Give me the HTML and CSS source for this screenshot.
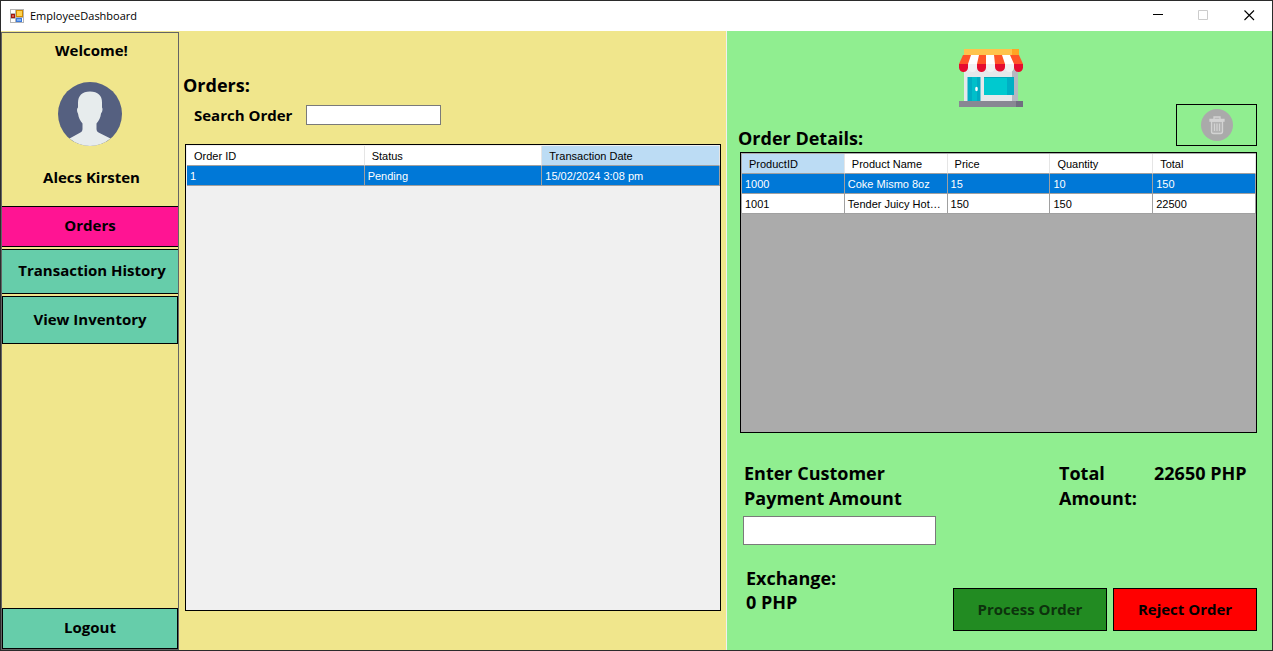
FILE: index.html
```html
<!DOCTYPE html>
<html lang="en">
<head>
<meta charset="utf-8">
<title>EmployeeDashboard</title>
<link rel="stylesheet" href="styles.css">
</head>
<body>
<div class="window">
  <header class="titlebar">
    <svg class="app-icon" width="14" height="14" viewBox="0 0 14 14" aria-hidden="true">
      <rect width="14" height="14" fill="#b5b5b5"/>
      <path d="M1 1h4v3H1zM1 10h4v3H1zM12 9h1v4h-1z" fill="#fff"/>
      <rect x="6" y="1" width="7" height="7" fill="#d18b00"/><rect x="7" y="2" width="5" height="5" fill="#ffd34e"/>
      <rect x="1" y="5" width="4" height="4" fill="#a01810"/><rect x="2" y="6" width="2" height="2" fill="#dd5a4c"/>
      <rect x="6" y="9" width="6" height="4" fill="#3c78d8"/><rect x="7" y="10" width="4" height="2" fill="#7db0f5"/>
    </svg>
    <h1 class="title">EmployeeDashboard</h1>
    <div class="window-controls">
      <button class="window-button" type="button" aria-label="Minimize"><svg width="11" height="11" viewBox="0 0 11 11"><path d="M1 4.500h10" stroke="#000"/></svg></button>
      <button class="window-button" type="button" aria-label="Maximize" disabled><svg width="11" height="11" viewBox="0 0 11 11"><path d="M.5.5h9v9h-9z" fill="none" stroke="#ccc"/></svg></button>
      <button class="window-button" type="button" aria-label="Close"><svg width="11" height="11" viewBox="0 0 11 11"><path d="M.5.5l9.500 9.500M10 .5L.5 10" fill="none" stroke="#000" stroke-width="1.100"/></svg></button>
    </div>
  </header>
  <div class="content">
    <nav class="sidebar">
      <div class="profile">
        <p class="label">Welcome!</p>
        <svg class="avatar" width="64" height="64" viewBox="0 0 64 64" role="img" aria-label="User avatar">
          <circle cx="32" cy="32" r="32" fill="#556080"/>
          <path d="M32 9.500c-8 0-12 4.500-12 11v5c-1.500 1-1 4.500 0 6 .6 4.500 2 7 4.500 10V47c0 2-1 3-3 4L11.500 56.500A32 32 0 0 0 52.500 56.500L41.500 51c-2-1-3-2-3-4v-5.500c2.500-3 4-5.500 4.500-10 1.500-1.500 2-5 1-6v-5c0-7-4-11-12-11z" fill="#e7eced"/>
        </svg>
        <p class="label">Alecs Kirsten</p>
      </div>
      <button class="nav-button nav-button-orders" type="button">Orders</button>
      <button class="nav-button nav-button-history" type="button">Transaction History</button>
      <button class="nav-button nav-button-inventory" type="button">View Inventory</button>
      <button class="nav-button nav-button-logout" type="button">Logout</button>
    </nav>
    <main class="orders">
      <h2 class="heading">Orders:</h2>
      <div class="search-row">
        <label class="label" for="search">Search Order</label>
        <input class="field search-field" id="search" type="text">
      </div>
      <div class="grid-box grid-box-light">
        <table class="data-grid">
          <thead><tr><th>Order ID</th><th>Status</th><th class="sorted">Transaction Date</th></tr></thead>
          <tbody><tr class="selected"><td>1</td><td>Pending</td><td>15/02/2024 3:08 pm</td></tr></tbody>
        </table>
      </div>
    </main>
    <section class="details">
      <div class="details-top">
        <h2 class="heading">Order Details:</h2>
        <svg class="store" width="64" height="58" viewBox="0 0 64 58" role="img" aria-label="Store">
          <path d="M5 14h48v38H5z" fill="#e6e8ea"/><path d="M53 22l6-4v34h-6z" fill="#b5b8c1"/>
          <path d="M5 0h48v6H5z" fill="#ffc34c"/><path d="M53 0h7v6h-7z" fill="#ffa424"/>
          <path d="M4 6h56l4 9H0z" fill="#ff5527"/>
          <path d="M12 6h8l-2 9H9zM27 6h8l1 9h-9zM43 6h8l4 9h-9z" fill="#fff"/>
          <path d="M0 15h9v3.500a4.500 4.500 0 0 1-9 0zM18 15h9v3.500a4.500 4.500 0 0 1-9 0zM36 15h10v3a5 4.500 0 0 1-10 0zM55 15h9v3.500a4.500 4.500 0 0 1-9 0z" fill="#e60b2f"/>
          <path d="M9 15h9v3.500a4.500 4.500 0 0 1-9 0zM27 15h9v3.500a4.500 4.500 0 0 1-9 0zM46 15h9v3.500a4.500 4.500 0 0 1-9 0z" fill="#f1f1f2"/>
          <path d="M8.500 28h13v24h-13z" fill="#00acc2"/><path d="M13 28h5v24h-5z" fill="#00bfca"/>
          <ellipse cx="17.500" cy="40" rx="1.300" ry="2.200" fill="#fff"/>
          <path d="M25 28h23v18H25z" fill="#00c9cf"/><path d="M48 28h7v18h-7z" fill="#00afc4"/><path d="M25 28h30v1H25z" fill="#00a9bb"/>
          <path d="M0 52h57v6H0z" fill="#888793"/><path d="M57 52h7v6h-7z" fill="#706e80"/>
        </svg>
        <button class="delete-button" type="button" aria-label="Delete product" disabled>
          <svg width="32" height="32" viewBox="0 0 32 32">
            <circle cx="16" cy="16" r="16" fill="#aaa"/>
            <path d="M10.500 12h11v10.500q0 2-2 2h-7q-2 0-2-2z" fill="#b3b3b3" stroke="#d3d3d3" stroke-width="1.300"/>
            <path d="M9 10.500h14v1.500H9zM13 10V8h6v2" fill="#b3b3b3" stroke="#d3d3d3" stroke-width="1.300"/>
            <path d="M13.500 14.500v7.500M16 14.500v7.500M18.500 14.500v7.500" fill="none" stroke="#d3d3d3" stroke-width="1.200"/>
          </svg>
        </button>
      </div>
      <div class="grid-box grid-box-dark">
        <table class="data-grid">
          <thead><tr><th class="sorted">ProductID</th><th>Product Name</th><th>Price</th><th>Quantity</th><th>Total</th></tr></thead>
          <tbody>
            <tr class="selected"><td>1000</td><td>Coke Mismo 8oz</td><td>15</td><td>10</td><td>150</td></tr>
            <tr><td>1001</td><td>Tender Juicy Hotdog</td><td>150</td><td>150</td><td>22500</td></tr>
          </tbody>
        </table>
      </div>
      <div class="summary">
        <div class="payment">
          <label class="heading" for="payment">Enter Customer<br>Payment Amount</label>
          <input class="field payment-field" id="payment" type="text">
        </div>
        <p class="heading total-label">Total Amount:</p>
        <output class="heading total-value">22650 PHP</output>
      </div>
      <div class="checkout">
        <p class="heading exchange">Exchange:<br>0 PHP</p>
        <button class="action process" type="button" disabled>Process Order</button>
        <button class="action reject" type="button">Reject Order</button>
      </div>
    </section>
  </div>
</div>
</body>
</html>
```
FILE: styles.css
```css
* { box-sizing: border-box; }

body {
  margin: 0;
  color: #000;
  font-family: "Open Sans", "Noto Sans", sans-serif;
}

h1, h2, p { margin: 0; }
button { margin: 0; padding: 0; color: #000; font: inherit; }
svg { display: block; }

.window {
  display: flex;
  flex-direction: column;
  min-height: 100vh;
  border: 1px solid #2b2b2b;
}

.titlebar {
  display: flex;
  align-items: center;
  height: 30px;
  padding-left: 9px;
  gap: 6px;
  background: #fff;
}
.title { font-size: 11px; font-weight: 400; line-height: 16px; }
.window-controls { display: flex; height: 100%; margin-left: auto; }
.window-button {
  display: grid;
  place-items: center;
  width: 46px;
  padding-bottom: 1px;
  border: 0;
  background: transparent;
}

.content {
  display: grid;
  flex: 1;
  grid-template-columns: 178px minmax(0, 548fr) minmax(0, 545fr);
  background: #f0e68c;
}

.label, .nav-button, .action { font-size: 15px; font-weight: 700; line-height: 20px; }
.heading { font-size: 18px; font-weight: 700; line-height: 25px; }

.sidebar {
  display: flex;
  flex-direction: column;
  gap: 2px;
  margin-top: 1px;
  border: 1px solid #646464;
}
.profile {
  display: flex;
  flex-direction: column;
  align-items: center;
  height: 171px;
  padding-top: 7px;
}
.profile .label { padding-left: 3px; }
.avatar { margin: 22px 0 21px; }
.nav-button {
  padding-bottom: 3px;
  border: 1px solid #000;
  background: #66cdaa;
}
.nav-button-orders { height: 41px; border-width: 1px 0; background: #ff1493; }
.nav-button-history { height: 45px; border-width: 1px 0; padding-left: 4px; }
.nav-button-inventory { height: 48px; }
.nav-button-logout { height: 41px; margin-top: auto; }

.orders {
  display: flex;
  flex-direction: column;
  padding: 42px 5px 39px 6px;
  border-right: 1px solid #f0f0f0;
}
.orders > .heading { margin-left: -2px; }
.search-row {
  display: flex;
  align-items: center;
  gap: 14px;
  margin: 7px 0 19px 9px;
}
.field {
  border: 1px solid #7a7a7a;
  background: #fff;
  font: inherit;
}
.search-field { width: 135px; height: 20px; }

.grid-box { border: 1px solid #000; padding: 1px 0 0 1px; }
.grid-box-light { flex: 1; background: #f0f0f0; }
.grid-box-dark { flex: 1; background: #ababab; }
.data-grid {
  width: 100%;
  border-collapse: separate;
  border-spacing: 0;
  table-layout: fixed;
  font: 11px/18px "Liberation Sans", Arial, sans-serif;
}
.data-grid th, .data-grid td {
  overflow: hidden;
  padding: 1px 3px 0;
  border-right: 1px solid #a0a0a0;
  border-bottom: 1px solid #a0a0a0;
  background: #fff;
  text-align: left;
  text-overflow: ellipsis;
  white-space: nowrap;
}
.data-grid th { padding-left: 7px; border-right-color: #e5e5e5; font-weight: 400; }
.data-grid .sorted { background: #bcdcf4; }
.data-grid .selected td { background: #0078d7; color: #fff; }

.details {
  display: flex;
  flex-direction: column;
  padding: 18px 15px 19px 13px;
  background: #90ee90;
}
.details-top {
  display: grid;
  grid-template-columns: 1fr 64px 1fr;
  height: 103px;
}
.details-top .heading { align-self: end; margin: 0 0 1px -2px; white-space: nowrap; }
.store { margin-left: -8px; }
.delete-button {
  display: grid;
  place-items: center;
  align-self: end;
  justify-self: end;
  width: 81px;
  height: 42px;
  margin-bottom: 6px;
  border: 1px solid #000;
  background: transparent;
}

.summary {
  display: flex;
  margin: 28px 2px 0 3px;
}
.payment { display: flex; flex-direction: column; gap: 5px; }
.payment .heading { padding-left: 1px; }
.payment-field { width: 193px; height: 29px; }
.total-label { width: 80px; margin-left: auto; }
.total-value { width: 101px; margin-left: 15px; white-space: nowrap; }

.checkout {
  display: flex;
  align-items: flex-end;
  gap: 6px;
  margin-top: 21px;
}
.exchange { align-self: flex-start; margin: 0 auto 17px 6px; line-height: 24px; }
.action { height: 43px; padding-bottom: 2px; border: 1px solid #000; }
.process { width: 154px; background: #228b22; color: #0d330d; }
.reject { width: 144px; background: #f00; }
```
